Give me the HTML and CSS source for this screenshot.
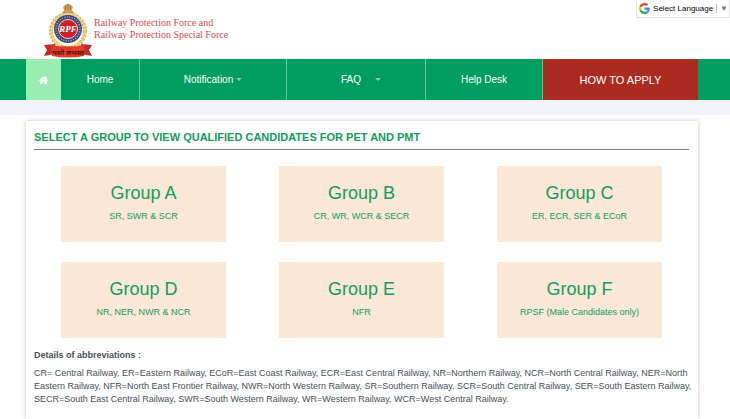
FILE: index.html
```html
<!DOCTYPE html>
<html lang="en">
<head>
  <meta charset="UTF-8">
  <meta name="viewport" content="width=device-width, initial-scale=1.0">
  <title>Railway Protection Force</title>
  <link rel="stylesheet" href="styles.css">
</head>
<body>

  <!-- Header -->
  <header class="header">
    <a href="#" class="logo">
      <svg class="emblem" viewBox="0 0 50 56" aria-hidden="true">
        <!-- Lion capital -->
        <path d="M18 13 L20 10 L21 8 L20 5 L22 3 L25 1.500 L28 3 L30 5 L29 8 L30 10 L32 13 Z" fill="#d3a45c"/>
        <path d="M22.500 3.500v5M25 2v7M27.500 3.500v5M20 10.500h10" stroke="#96652f" stroke-width=".8"/>
        <!-- Wreath -->
        <ellipse cx="25" cy="29" rx="18" ry="18" fill="#fdf6e0"/>
        <ellipse cx="25" cy="29" rx="17" ry="17" fill="none" stroke="#dcae57" stroke-width="4" stroke-dasharray="2.500 1"/>
        <ellipse cx="25" cy="29" rx="17" ry="17" fill="none" stroke="#ecd189" stroke-width="1.500"/>
        <!-- Badge -->
        <circle cx="25" cy="27" r="14" fill="#3e4678"/>
        <circle cx="25" cy="27" r="12" fill="none" stroke="#a9aecb" stroke-width="1.500" stroke-dasharray="1 1.500"/>
        <circle cx="25" cy="27" r="9.500" fill="#c9202c" stroke="#f1dcc0" stroke-width="1"/>
        <text x="25" y="30" class="emblem-letters">RPF</text>
        <!-- Ribbon -->
        <path d="M1 43 L12 42 L12 52 L1 54 L4 48 Z M49 43 L38 42 L38 52 L49 54 L46 48 Z" fill="#c22a26"/>
        <path d="M8 43 Q25 46 42 43 L41 54 Q25 57 9 54 Z" fill="#e23a2d"/>
        <text x="25" y="53" class="emblem-motto">यशो लभस्व</text>
      </svg>
      <span class="logo-text">Railway Protection Force and<br>Railway Protection Special Force</span>
    </a>

    <div class="translate">
      <svg class="google" viewBox="0 0 48 48" aria-hidden="true">
        <path fill="#ea4335" d="M24 9.500c3.540 0 6.710 1.220 9.210 3.600l6.850-6.850C35.900 2.380 30.470 0 24 0 14.620 0 6.510 5.380 2.560 13.220l7.980 6.190C12.430 13.720 17.740 9.500 24 9.500z"/>
        <path fill="#4285f4" d="M46.980 24.550c0-1.570-.15-3.090-.38-4.550H24v9.020h12.940c-.58 2.960-2.260 5.480-4.780 7.180l7.730 6c4.510-4.180 7.090-10.360 7.090-17.650z"/>
        <path fill="#fbbc05" d="M10.530 28.590c-.48-1.450-.76-2.990-.76-4.590s.27-3.140.76-4.590l-7.980-6.190C.92 16.460 0 20.120 0 24c0 3.880.92 7.540 2.560 10.780l7.970-6.190z"/>
        <path fill="#34a853" d="M24 48c6.480 0 11.930-2.130 15.890-5.810l-7.730-6c-2.150 1.450-4.920 2.300-8.160 2.300-6.260 0-11.570-4.220-13.470-9.910l-7.980 6.190C6.510 42.620 14.620 48 24 48z"/>
      </svg>
      <select class="language" aria-label="Select Language">
        <option>Select Language</option>
      </select>
      <span class="language-arrow" aria-hidden="true">▼</span>
    </div>
  </header>

  <!-- Navigation -->
  <nav class="navbar">
    <div class="nav-list">
      <a href="#" class="nav-item nav-icon" aria-label="Home page">
        <svg class="house" viewBox="0 0 18 16" aria-hidden="true">
          <path d="M9 0 L12 3 V1 H15.500 V6 L18 9 L16 10.500 L9 4 L2 10.500 L0 9 Z M9 5 L15.500 11 V16 H10.500 V11 H7.500 V16 H2.500 V11 Z" fill="#fff"/>
        </svg>
      </a>
      <a href="#" class="nav-item">Home</a>
      <a href="#" class="nav-item">Notification <span class="caret"></span></a>
      <a href="#" class="nav-item nav-wide">FAQ <span class="caret"></span></a>
      <a href="#" class="nav-item">Help Desk</a>
      <a href="#" class="nav-item nav-apply">HOW TO APPLY</a>
    </div>
  </nav>
  <div class="strip"></div>

  <!-- Content -->
  <main class="panel">
    <h1 class="title">SELECT A GROUP TO VIEW QUALIFIED CANDIDATES FOR PET AND PMT</h1>

    <div class="groups">
      <a href="#" class="group">
        <span class="group-name">Group A</span>
        <span class="group-zones">SR, SWR &amp; SCR</span>
      </a>
      <a href="#" class="group">
        <span class="group-name">Group B</span>
        <span class="group-zones">CR, WR, WCR &amp; SECR</span>
      </a>
      <a href="#" class="group">
        <span class="group-name">Group C</span>
        <span class="group-zones">ER, ECR, SER &amp; ECoR</span>
      </a>
      <a href="#" class="group">
        <span class="group-name">Group D</span>
        <span class="group-zones">NR, NER, NWR &amp; NCR</span>
      </a>
      <a href="#" class="group">
        <span class="group-name">Group E</span>
        <span class="group-zones">NFR</span>
      </a>
      <a href="#" class="group">
        <span class="group-name">Group F</span>
        <span class="group-zones">RPSF (Male Candidates only)</span>
      </a>
    </div>

    <h2 class="subtitle">Details of abbreviations :</h2>
    <p class="details">CR= Central Railway, ER=Eastern Railway, ECoR=East Coast Railway, ECR=East Central Railway, NR=Northern Railway, NCR=North Central Railway, NER=North Eastern Railway, NFR=North East Frontier Railway, NWR=North Western Railway, SR=Southern Railway, SCR=South Central Railway, SER=South Eastern Railway, SECR=South East Central Railway, SWR=South Western Railway, WR=Western Railway, WCR=West Central Railway.</p>
  </main>

</body>
</html>
```
FILE: styles.css
```css
* {
  box-sizing: border-box;
}

body {
  display: flex;
  flex-direction: column;
  min-height: 100vh;
  margin: 0;
  font-family: "Liberation Sans", Arial, sans-serif;
  font-size: 10px;
  color: #4a4f54;
  background-color: #fff;
}

a {
  color: inherit;
  text-decoration: none;
}

/* Header */
.header {
  display: flex;
  justify-content: space-between;
  align-items: flex-start;
  padding-left: 43px;
}

.logo {
  display: flex;
  gap: 1px;
  padding-top: 2px;
  height: 59px;
}

.emblem {
  width: 50px;
  height: 56px;
}

.emblem-letters {
  font: italic bold 9px "Liberation Serif", serif;
  text-anchor: middle;
  fill: #fff;
}

.emblem-motto {
  font: bold 7px "Noto Sans", sans-serif;
  text-anchor: middle;
  fill: #5c1210;
}

.logo-text {
  padding-top: 15px;
  font-family: "Liberation Serif", "Times New Roman", serif;
  font-size: 10px;
  line-height: 12px;
  color: #dc4a4e;
}

.translate {
  display: flex;
  align-items: center;
  height: 18px;
  padding: 0 1px 0 2px;
  border: 1px solid #e4e4e4;
  border-top: 0;
}

.google {
  width: 11px;
  height: 11px;
}

.language {
  appearance: none;
  margin: 0 2px 0 3px;
  padding: 0;
  border: 0;
  background: none;
  font-family: inherit;
  font-size: 8px;
  color: #000;
}

.language-arrow {
  padding-left: 3px;
  border-left: 1px solid #bbb;
  font-size: 8px;
  color: #767676;
}

/* Navigation */
.navbar {
  background-color: #009d60;
}

.nav-list {
  display: grid;
  grid-template-columns: 35fr 79fr 147fr 139fr 117fr 155fr;
  height: 41px;
  margin: 0 32px 0 26px;
}

.nav-item {
  display: flex;
  justify-content: center;
  align-items: center;
  gap: 3px;
  border-right: 1px solid #66c49f;
  color: #fff;
}

.nav-wide {
  gap: 14px;
  padding-left: 10px;
}

.nav-icon {
  border-right: 0;
  background-color: #99edb1;
}

.house {
  width: 9px;
  height: 8px;
}

.caret {
  border: 3px solid transparent;
  border-top-color: #a9b8ae;
  border-bottom: 0;
}

.nav-apply {
  border-right: 0;
  background-color: #ac2b21;
  font-size: 11px;
}

.strip {
  height: 15px;
  background-color: #f2f3f9;
}

/* Content */
.panel {
  flex: 1;
  margin: 6px 32px 0 26px;
  padding: 9px 9px 0 8px;
  box-shadow: 0 0 4px rgba(0, 0, 0, 0.25);
}

.title {
  margin: 0;
  padding-bottom: 5px;
  border-bottom: 1px solid #808080;
  font-size: 11px;
  line-height: 14px;
  color: #149b60;
}

.groups {
  display: grid;
  grid-template-columns: repeat(3, 1fr);
  gap: 20px 53px;
  padding: 16px 27px 0;
}

.group {
  display: flex;
  flex-direction: column;
  align-items: center;
  gap: 4px;
  height: 76px;
  padding-top: 15px;
  background-color: #f9e8d6;
  color: #149b60;
}

.group-name {
  font-size: 18px;
  line-height: 24px;
}

.group-zones {
  font-size: 9px;
  line-height: 14px;
}

.subtitle {
  margin: 10px 0 5px;
  font-size: 9px;
  line-height: 14px;
}

.details {
  margin: 0 -6px 0 0;
  font-size: 9px;
  line-height: 13px;
}
```
